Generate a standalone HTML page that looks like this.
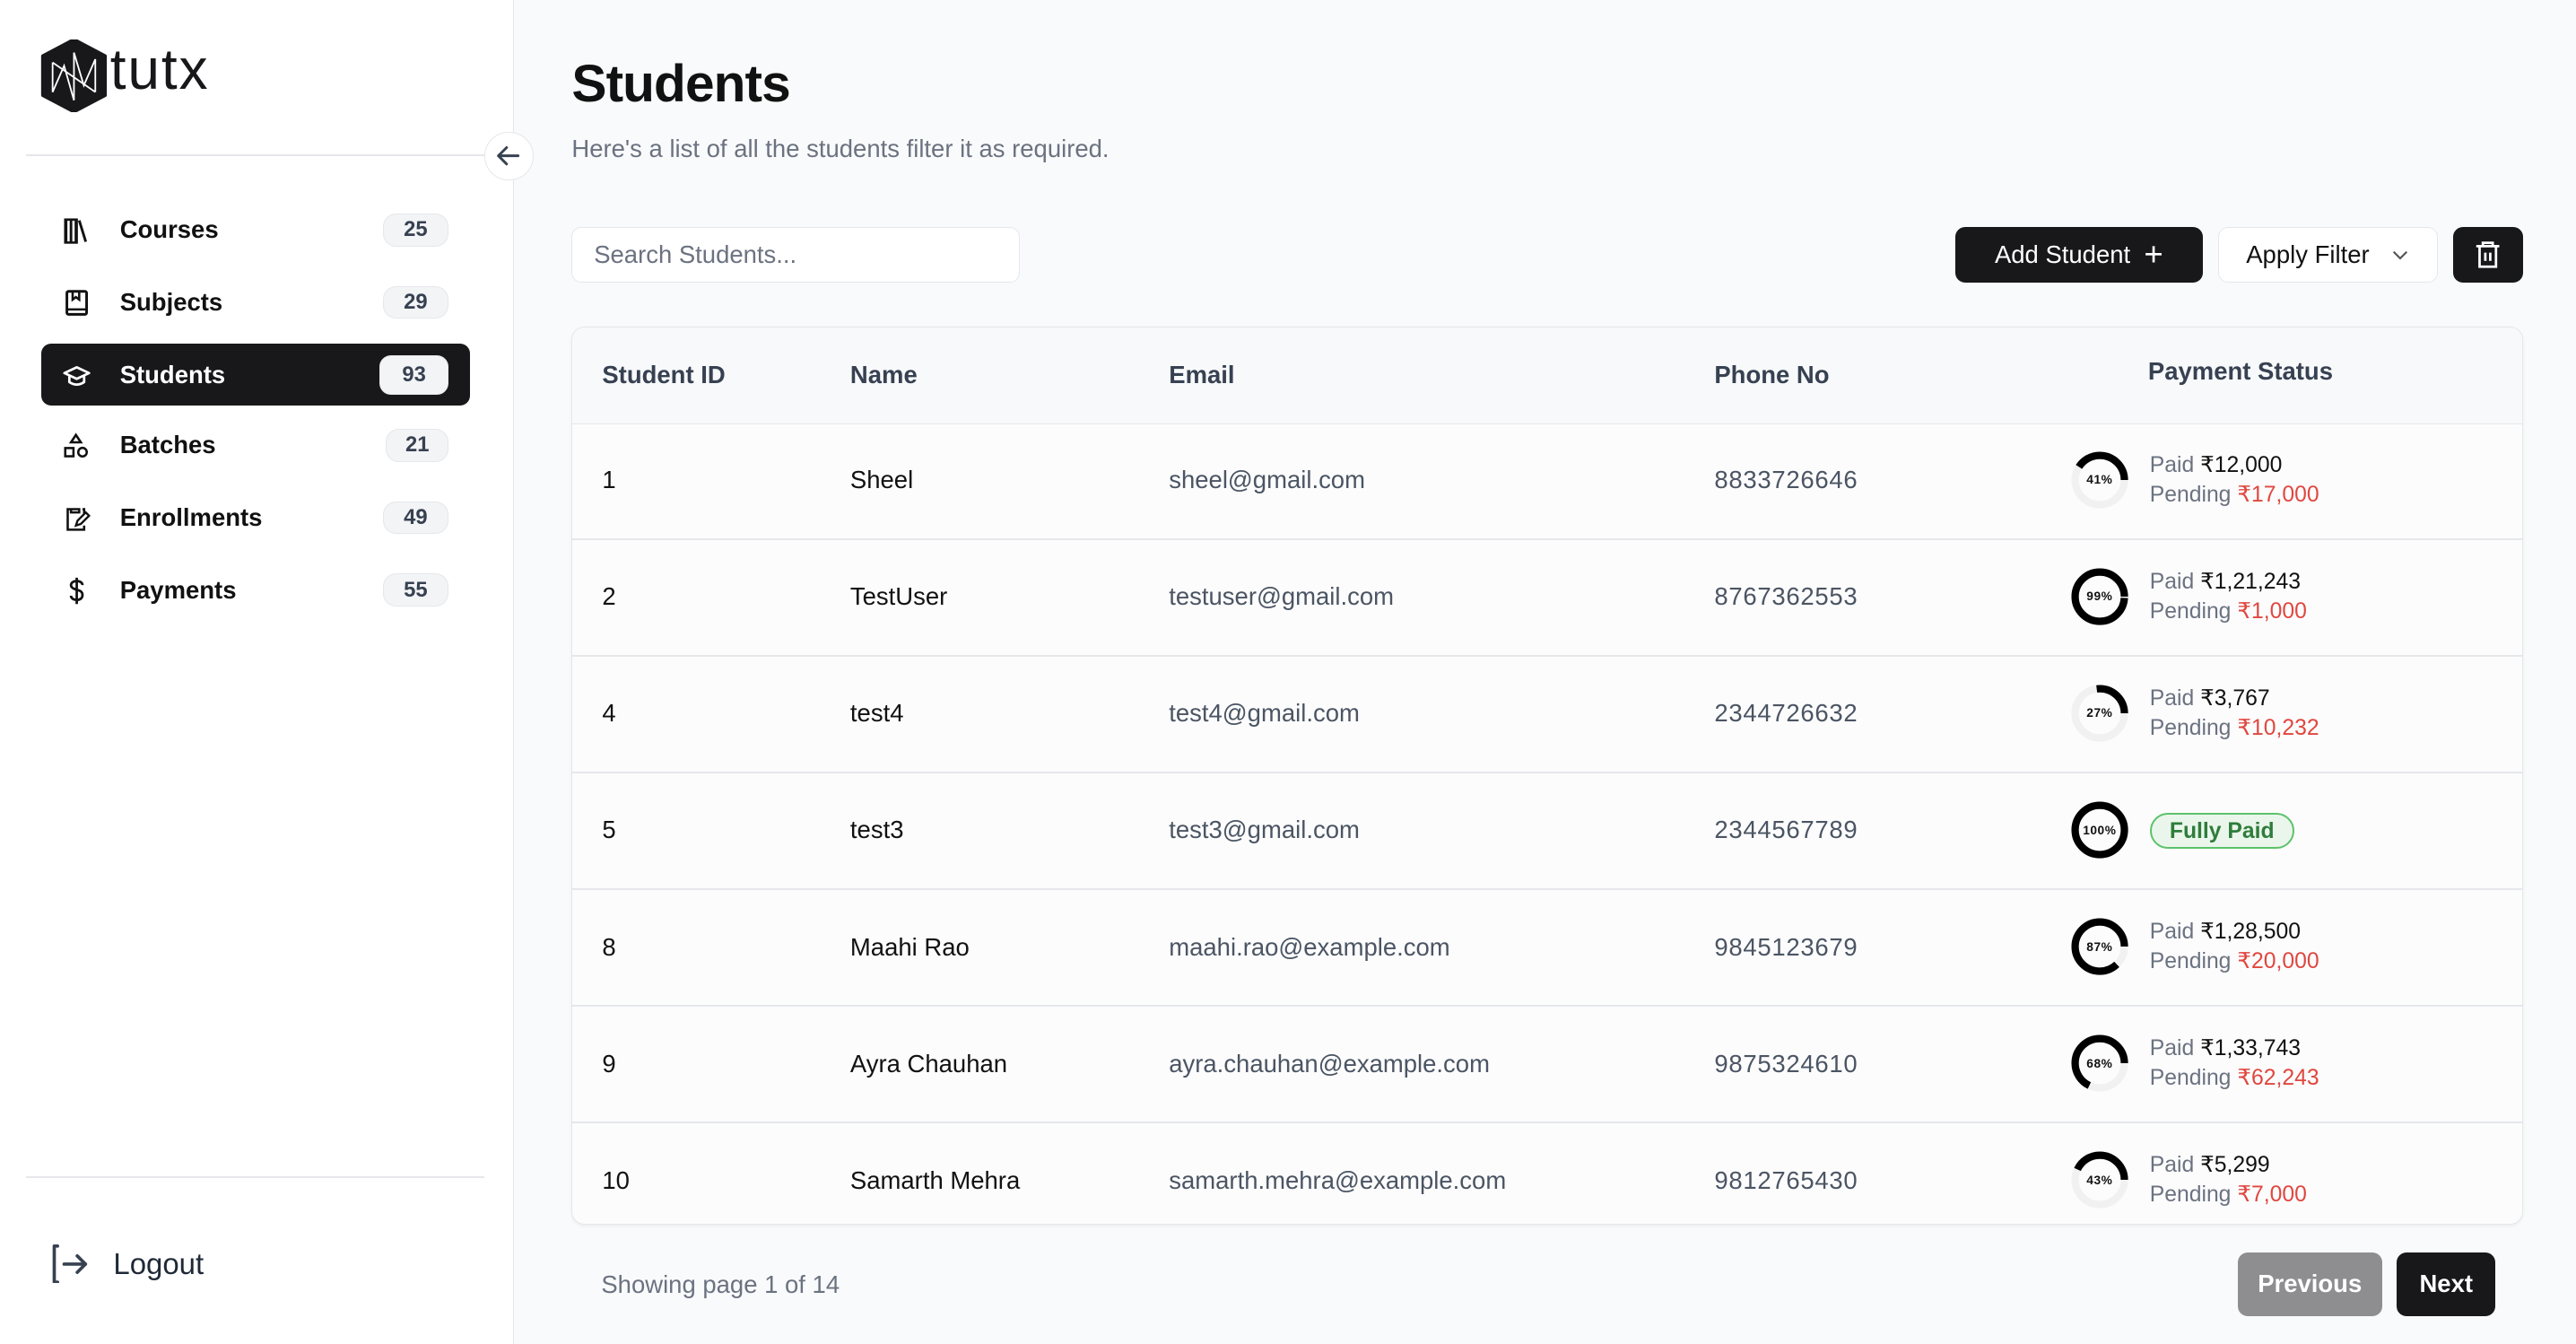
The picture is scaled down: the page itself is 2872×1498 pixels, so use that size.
<!DOCTYPE html>
<html><head><meta charset="utf-8"><style>
html,body{margin:0;padding:0;width:2872px;height:1498px;overflow:hidden;background:#f9fafb}
#w{zoom:1.8316;width:1568px;height:818px;position:relative;font-family:"Liberation Sans",sans-serif;color:#111}
.a{position:absolute}
.side{left:0;top:0;width:313px;height:818px;background:#fff;border-right:1px solid #e5e7eb;box-sizing:border-box}
.nav{left:25px;width:261px;height:38px;border-radius:6px;display:flex;align-items:center}
.nav .ic{position:absolute;left:13px;top:11px;width:17px;height:17px}
.nav .lb{position:absolute;left:48px;font-size:15px;font-weight:600;color:#111}
.nav .bd{position:absolute;right:13px;height:20px;border-radius:8px;background:#f3f4f6;border:1px solid #e5e7eb;font-size:13px;font-weight:700;color:#374151;display:flex;align-items:center;justify-content:center;width:40px;box-sizing:border-box}
.nav.act{background:#18181b}
.nav.act .lb{color:#fff}
.nav.act .bd{background:#f3f4f6;color:#374151;width:42px;height:24px;border-radius:7px}
.btn{border-radius:6px;display:flex;align-items:center;justify-content:center;font-size:15px;box-sizing:border-box}
.tbl{left:348px;top:199px;width:1188px;height:546px;border:1px solid #e5e7eb;border-radius:8px;background:#fcfcfd;overflow:hidden;box-sizing:border-box;box-shadow:0 1px 2px rgba(0,0,0,.05)}
.hd{position:absolute;left:0;top:0;width:100%;height:58px;background:#f8f9fb;border-bottom:1px solid #e5e7eb}
.hd span{position:absolute;top:20px;font-size:15px;font-weight:600;color:#374151}
.row{position:absolute;left:0;width:100%;height:71px;border-bottom:1.5px solid #e5e7eb;box-sizing:border-box}
.row span{position:absolute;top:26px;font-size:15px}
.c1{left:18px;color:#111;font-weight:500}.c2{left:169px;color:#111;font-weight:500}.c3{left:363px;color:#4b5563}.c4{left:695px;color:#4b5563;letter-spacing:.4px}
.ring{position:absolute;left:912px;top:17px;width:35px;height:35px}
.ring b{position:absolute;left:0;top:0;width:35px;height:35px;display:flex;align-items:center;justify-content:center;font-size:7.5px;font-weight:600;color:#111;letter-spacing:.3px}
.pay{position:absolute;left:960px;top:17px;font-size:13.5px;line-height:18px;color:#6b7280}
.pay i{font-style:normal;color:#111;font-weight:500}
.pay em{font-style:normal;color:#e0473f;font-weight:500}
</style></head><body><div id="w">
<div class="a side"></div>
<svg class="a" style="left:24px;top:24px" width="42" height="44" viewBox="0 0 42 44"><polygon points="21,0 40,10 40,34 21,44 2,34 2,10" fill="#18181b" stroke="#18181b" stroke-width="2" stroke-linejoin="round"/><path d="M8,14 L8,32 L15,16 L21,37 L21,8 L27,28 L34,12 L34,32 M8,14 L34,32" stroke="#fff" stroke-width="1" fill="none"/></svg>
<div class="a" style="left:67px;top:22px;font-size:35px;font-weight:300;color:#18181b;letter-spacing:1px">tutx</div>
<div class="a" style="left:16px;top:94px;width:279px;height:1px;background:#e5e7eb"></div>
<div class="a" style="left:295px;top:80px;width:30px;height:30px;border-radius:50%;background:#fff;border:1px solid #e5e7eb;box-sizing:border-box"><svg width="28" height="28" viewBox="0 0 28 28"><path d="M20,14 H8 M13,9 L8,14 L13,19" stroke="#374151" stroke-width="1.6" fill="none" stroke-linecap="round" stroke-linejoin="round"/></svg></div>

<div class="a nav" style="top:121px"><svg class="ic" viewBox="0 0 17 17"><path d="M2,2v13M5,2v13M8,2v13M10,2l4,13" stroke="#111" stroke-width="1.6" fill="none"/><rect x="1.5" y="1.5" width="7" height="14" fill="none" stroke="#111" stroke-width="1.4"/></svg><span class="lb">Courses</span><span class="bd">25</span></div>
<div class="a nav" style="top:165px"><svg class="ic" viewBox="0 0 17 17"><rect x="2.5" y="1.5" width="12" height="14" rx="1" fill="none" stroke="#111" stroke-width="1.6"/><path d="M2.5,12.5h12M6,1.5v5l2-1.5 2,1.5v-5" stroke="#111" stroke-width="1.4" fill="none"/></svg><span class="lb">Subjects</span><span class="bd">29</span></div>
<div class="a nav act" style="top:209px"><svg class="ic" viewBox="0 0 17 17"><path d="M1,7 L8.5,3.5 L16,7 L8.5,10.5Z M4,9v3.5c3,2 6,2 9,0V9" stroke="#fff" stroke-width="1.5" fill="none" stroke-linejoin="round"/></svg><span class="lb">Students</span><span class="bd">93</span></div>
<div class="a nav" style="top:252px"><svg class="ic" viewBox="0 0 17 17"><path d="M8,1.5 L11,6 H5Z" stroke="#111" stroke-width="1.4" fill="none"/><rect x="1.5" y="9.5" width="5" height="5" fill="none" stroke="#111" stroke-width="1.4"/><circle cx="12" cy="12" r="2.6" fill="none" stroke="#111" stroke-width="1.4"/></svg><span class="lb">Batches</span><span class="bd" style="width:38px">21</span></div>
<div class="a nav" style="top:296px"><svg class="ic" viewBox="0 0 17 17"><path d="M5,3H3v12.5h10V13M5,3h5v2H5Z M12,3h1v3" stroke="#111" stroke-width="1.4" fill="none"/><path d="M8,13 l1-3 5-5 2,2-5,5z" stroke="#111" stroke-width="1.3" fill="none"/></svg><span class="lb">Enrollments</span><span class="bd">49</span></div>
<div class="a nav" style="top:340px"><svg class="ic" viewBox="0 0 17 17"><path d="M12,5c0-1.5-1.5-2.5-3.5-2.5S5,3.5,5,5s1.5,2.3,3.5,2.8S12,9,12,11s-1.5,3-3.5,3S5,13,5,11.5M8.5,0.5v16" stroke="#111" stroke-width="1.5" fill="none"/></svg><span class="lb">Payments</span><span class="bd">55</span></div>

<div class="a" style="left:16px;top:716px;width:279px;height:1px;background:#e5e7eb"></div>
<svg class="a" style="left:30px;top:757px" width="26" height="24" viewBox="0 0 26 24"><path d="M5,1H3v22h2M9,12h13M17,7l5,5-5,5" stroke="#374151" stroke-width="2" fill="none" stroke-linecap="round" stroke-linejoin="round"/></svg>
<div class="a" style="left:69px;top:759px;font-size:18px;color:#1f2937">Logout</div>

<div class="a" style="left:348px;top:33px;font-size:32px;font-weight:700;color:#111;letter-spacing:-.5px">Students</div>
<div class="a" style="left:348px;top:82px;font-size:15px;color:#6b7280">Here's a list of all the students filter it as required.</div>
<div class="a" style="left:348px;top:138px;width:273px;height:34px;border:1px solid #e5e7eb;border-radius:6px;background:#fff;box-sizing:border-box;font-size:15px;color:#6b7280;padding:8px 13px">Search Students...</div>
<div class="a btn" style="left:1190px;top:138px;width:151px;height:34px;background:#18181b;color:#fff">Add Student&nbsp;&nbsp;<span style="font-size:20px;font-weight:300">+</span></div>
<div class="a btn" style="left:1350px;top:138px;width:134px;height:34px;background:#fff;border:1px solid #e5e7eb;color:#111">Apply Filter&nbsp;&nbsp;&nbsp;<svg width="12" height="8" viewBox="0 0 12 8"><path d="M2,2l4,4 4-4" stroke="#555" stroke-width="1.2" fill="none"/></svg></div>
<div class="a btn" style="left:1493px;top:138px;width:43px;height:34px;background:#18181b"><svg width="16" height="18" viewBox="0 0 16 18"><path d="M1,4h14M5,4V2h6v2M3,4v12.5h10V4M6.5,8v5M9.5,8v5" stroke="#fff" stroke-width="1.5" fill="none"/></svg></div>

<div class="a tbl">
<div class="hd"><span style="left:18px">Student ID</span><span style="left:169px">Name</span><span style="left:363px">Email</span><span style="left:695px">Phone No</span><span style="left:959px;top:18px">Payment Status</span></div>
<div class="row" style="top:58px"><span class="c1">1</span><span class="c2">Sheel</span><span class="c3">sheel@gmail.com</span><span class="c4">8833726646</span>
<div class="ring"><svg width="35" height="35" viewBox="0 0 35 35" style="transform:scaleY(-1)"><circle cx="17.5" cy="17.5" r="15" fill="none" stroke="#f1f1f2" stroke-width="4.5"/><circle cx="17.5" cy="17.5" r="15" fill="none" stroke="#000" stroke-width="4.5" stroke-dasharray="38.6 100"/></svg><b>41%</b></div>
<div class="pay">Paid <i>₹12,000</i><br>Pending <em>₹17,000</em></div></div>
<div class="row" style="top:129px"><span class="c1">2</span><span class="c2">TestUser</span><span class="c3">testuser@gmail.com</span><span class="c4">8767362553</span>
<div class="ring"><svg width="35" height="35" viewBox="0 0 35 35" style="transform:scaleY(-1)"><circle cx="17.5" cy="17.5" r="15" fill="none" stroke="#f1f1f2" stroke-width="4.5"/><circle cx="17.5" cy="17.5" r="15" fill="none" stroke="#000" stroke-width="4.5" stroke-dasharray="93.3 100"/></svg><b>99%</b></div>
<div class="pay">Paid <i>₹1,21,243</i><br>Pending <em>₹1,000</em></div></div>
<div class="row" style="top:200px"><span class="c1">4</span><span class="c2">test4</span><span class="c3">test4@gmail.com</span><span class="c4">2344726632</span>
<div class="ring"><svg width="35" height="35" viewBox="0 0 35 35" style="transform:scaleY(-1)"><circle cx="17.5" cy="17.5" r="15" fill="none" stroke="#f1f1f2" stroke-width="4.5"/><circle cx="17.5" cy="17.5" r="15" fill="none" stroke="#000" stroke-width="4.5" stroke-dasharray="25.4 100"/></svg><b>27%</b></div>
<div class="pay">Paid <i>₹3,767</i><br>Pending <em>₹10,232</em></div></div>
<div class="row" style="top:271px"><span class="c1">5</span><span class="c2">test3</span><span class="c3">test3@gmail.com</span><span class="c4">2344567789</span>
<div class="ring"><svg width="35" height="35" viewBox="0 0 35 35"><circle cx="17.5" cy="17.5" r="15" fill="none" stroke="#000" stroke-width="4.5"/></svg><b>100%</b></div>
<div class="a" style="left:960px;top:24px;height:22px;padding:0 11px;border:1.5px solid #5cc26a;border-radius:12px;background:#eaf6ec;color:#2f7d3b;font-size:13.5px;font-weight:700;line-height:21px;box-sizing:border-box">Fully Paid</div></div>
<div class="row" style="top:342px"><span class="c1">8</span><span class="c2">Maahi Rao</span><span class="c3">maahi.rao@example.com</span><span class="c4">9845123679</span>
<div class="ring"><svg width="35" height="35" viewBox="0 0 35 35" style="transform:scaleY(-1)"><circle cx="17.5" cy="17.5" r="15" fill="none" stroke="#f1f1f2" stroke-width="4.5"/><circle cx="17.5" cy="17.5" r="15" fill="none" stroke="#000" stroke-width="4.5" stroke-dasharray="82 100"/></svg><b>87%</b></div>
<div class="pay">Paid <i>₹1,28,500</i><br>Pending <em>₹20,000</em></div></div>
<div class="row" style="top:413px"><span class="c1">9</span><span class="c2">Ayra Chauhan</span><span class="c3">ayra.chauhan@example.com</span><span class="c4">9875324610</span>
<div class="ring"><svg width="35" height="35" viewBox="0 0 35 35" style="transform:scaleY(-1)"><circle cx="17.5" cy="17.5" r="15" fill="none" stroke="#f1f1f2" stroke-width="4.5"/><circle cx="17.5" cy="17.5" r="15" fill="none" stroke="#000" stroke-width="4.5" stroke-dasharray="64 100"/></svg><b>68%</b></div>
<div class="pay">Paid <i>₹1,33,743</i><br>Pending <em>₹62,243</em></div></div>
<div class="row" style="top:484px;border-bottom:none"><span class="c1">10</span><span class="c2">Samarth Mehra</span><span class="c3">samarth.mehra@example.com</span><span class="c4">9812765430</span>
<div class="ring"><svg width="35" height="35" viewBox="0 0 35 35" style="transform:scaleY(-1)"><circle cx="17.5" cy="17.5" r="15" fill="none" stroke="#f1f1f2" stroke-width="4.5"/><circle cx="17.5" cy="17.5" r="15" fill="none" stroke="#000" stroke-width="4.5" stroke-dasharray="40.5 100"/></svg><b>43%</b></div>
<div class="pay">Paid <i>₹5,299</i><br>Pending <em>₹7,000</em></div></div>
</div>

<div class="a" style="left:366px;top:773px;font-size:15px;color:#6b7280">Showing page 1 of 14</div>
<div class="a btn" style="left:1362px;top:762px;width:88px;height:39px;background:#8e8e90;color:#fff;font-weight:600">Previous</div>
<div class="a btn" style="left:1459px;top:762px;width:60px;height:39px;background:#18181b;color:#fff;font-weight:600">Next</div>
</div></body></html>
